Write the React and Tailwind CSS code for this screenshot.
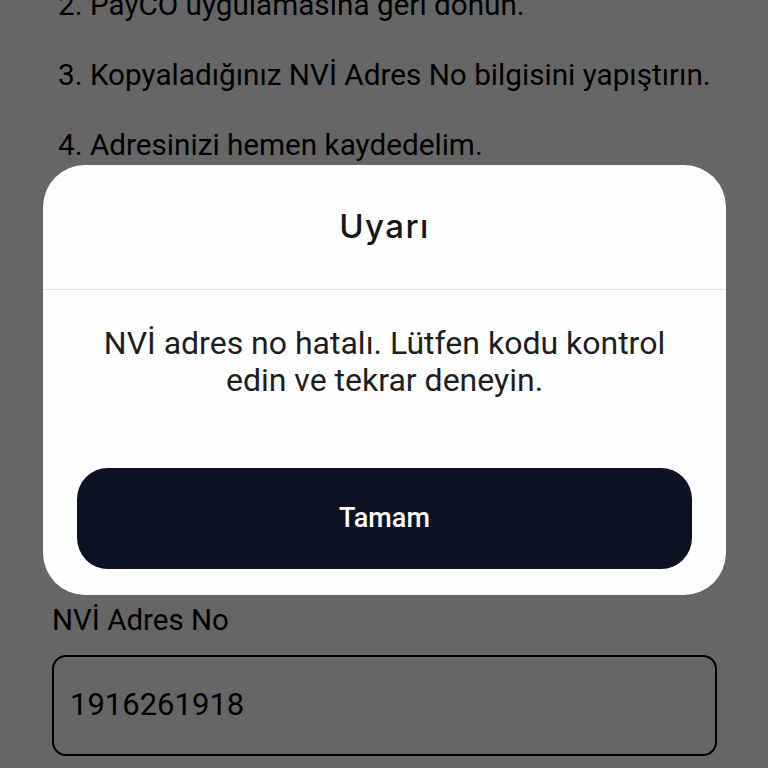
import React from 'react';

const steps = [
    '2. PayCO uygulamasına geri dönün.',
    '3. Kopyaladığınız NVİ Adres No bilgisini yapıştırın.',
    '4. Adresinizi hemen kaydedelim.',
];

const App = () => {
    return (
        <div className="relative h-[768px] overflow-hidden bg-white font-['Roboto',sans-serif] text-black">
            {/* Page behind the dialog */}
            <div className="flex flex-col">
                <div className="mt-[-13px] ml-[58px] flex flex-col gap-[34px]">
                    {steps.map((s) => (
                        <p key={s} className="text-[29.7px] leading-[36px] whitespace-nowrap">{s}</p>
                    ))}
                </div>

                <div className="h-[441px]" />

                <div className="pl-[52px] pr-[51px]">
                    <label className="block text-[29.5px] leading-[32px]">NVİ Adres No</label>
                    <div className="mt-[19px] h-[101px] rounded-[14px] border-2 border-black flex items-center px-[16px]">
                        <span className="text-[31px]">1916261918</span>
                    </div>
                </div>
            </div>

            {/* Dialog overlay */}
            <div className="absolute inset-0 bg-black/60 flex items-start justify-center pt-[165px] pl-[43px] pr-[42px]">
                <div className="w-full bg-[#fdfefe] rounded-[42px] overflow-hidden">
                    <div className="h-[125px] flex items-center justify-center border-b border-[#e2e4e4]">
                        <h2 className="font-['Inter',sans-serif] font-medium text-[33px] tracking-[1.4px] text-[#161616]">Uyarı</h2>
                    </div>
                    <div className="px-[34px] pt-[35px] pb-[26px]">
                        <p className="text-center text-[32px] leading-[37px] text-[#1e1e1e] whitespace-nowrap">
                            NVİ adres no hatalı. Lütfen kodu kontrol<br />edin ve tekrar deneyin.
                        </p>
                        <button className="mt-[69px] w-full h-[101px] rounded-[31px] bg-[#0b1222] text-white text-[27px] font-medium">
                            Tamam
                        </button>
                    </div>
                </div>
            </div>
        </div>
    );
};

export default App;
